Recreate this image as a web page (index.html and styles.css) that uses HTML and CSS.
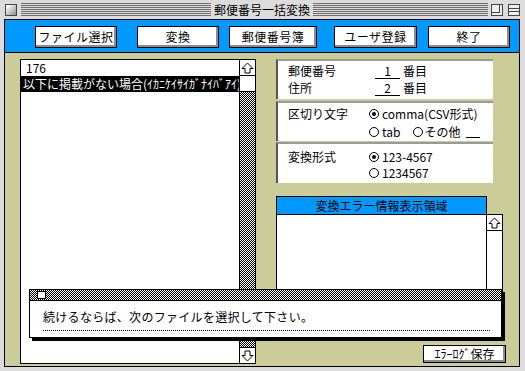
FILE: index.html
```html
<!DOCTYPE html>
<html>
<head>
<meta charset="utf-8">
<title>郵便番号一括変換</title>
<link rel="stylesheet" href="styles.css">
</head>
<body>
<div class="window">
 <div class="titlebar">
  <span class="close-box"></span>
  <span class="stripes first"></span>
  <span class="title">郵便番号一括変換</span>
  <span class="stripes"></span>
  <span class="zoom-box"></span>
  <span class="shade-box"></span>
 </div>
 <div class="content">
  <div class="toolbar">
   <span class="btn">ファイル選択</span>
   <span class="btn gap20">変換</span>
   <span class="btn wide gap10">郵便番号簿</span>
   <span class="btn w83 gap17">ユーザ登録</span>
   <span class="btn gap11">終了</span>
  </div>
  <div class="main">
   <div class="listbox">
    <div class="list">
     <div class="row">176</div>
     <div class="row selected">以下に掲載がない場合(ｲｶﾆｹｲｻｲｶﾞﾅｲﾊﾞｱｲ)</div>
    </div>
    <div class="scrollbar">
     <div class="arrow"><svg width="13" height="12" viewBox="0 0 13 12"><path d="M6.5 1 L12 6.5 H9 V11 H4 V6.5 H1 Z" fill="#fff" stroke="#000"/></svg></div>
     <div class="thumb"></div>
     <div class="track"></div>
     <div class="arrow down"><svg width="13" height="12" viewBox="0 0 13 12"><path d="M6.5 11 L12 5.5 H9 V1 H4 V5.5 H1 Z" fill="#fff" stroke="#000"/></svg></div>
    </div>
   </div>
   <div class="side">
    <div class="panel p1">
     <span>郵便番号</span><span class="val"><span class="field">1</span>番目</span>
     <span>住所</span><span class="val"><span class="field">2</span>番目</span>
    </div>
    <div class="panel p2">
     <span>区切り文字</span><span class="val"><span class="radio on"></span>comma(CSV形式)</span>
     <span></span><span class="val"><span class="radio"></span>tab<span class="radio sp"></span>その他<span class="blank"></span></span>
    </div>
    <div class="panel p3">
     <span>変換形式</span><span class="val"><span class="radio on"></span>123-4567</span>
     <span></span><span class="val"><span class="radio"></span>1234567</span>
    </div>
    <div class="err-head">変換エラー情報表示領域</div>
    <div class="err-list">
     <div class="list"></div>
     <div class="scrollbar plain">
      <div class="arrow"><svg width="13" height="12" viewBox="0 0 13 12"><path d="M6.5 1 L12 6.5 H9 V11 H4 V6.5 H1 Z" fill="#fff" stroke="#000"/></svg></div>
     </div>
    </div>
    <span class="btn save">ｴﾗｰﾛｸﾞ保存</span>
   </div>
  </div>
  <div class="dialog">
   <div class="dialog-bar"><span class="dialog-close"></span></div>
   <div class="dialog-body">
    <p>続けるならば、次のファイルを選択して下さい。</p>
    <div class="rule"></div>
   </div>
  </div>
 </div>
</div>
</body>
</html>
```

FILE: styles.css
```css
*{
 margin:0;
 padding:0;
 box-sizing:border-box;
}
body{
 width:525px;
 height:371px;
 overflow:hidden;
 background:#dcdcdc;
 font-family:"Noto Sans CJK JP","Noto Sans",sans-serif;
 font-size:12px;
 color:#000;
}
.window{
 width:525px;
 height:371px;
 padding:0 5px 4px 4px;
 display:flex;
 flex-direction:column;
}

/* title bar */
.titlebar{
 height:19px;
 display:flex;
 align-items:center;
 padding-left:1px;
}
.close-box{
 width:12px;
 height:12px;
 border:1px solid #444;
 background:linear-gradient(135deg,#fff 10%,#999 90%);
 margin-right:4px;
}
.stripes{
 flex:1;
 height:13px;
 background:repeating-linear-gradient(#6e6e6e 0 1px,#dcdcdc 1px 2px);
}
.stripes.first{
 flex:none;
 width:190px;
}
.title{
 width:102px;
 text-align:center;
 line-height:19px;
}
.zoom-box,.shade-box{
 width:12px;
 height:12px;
 border:1px solid #444;
 background:#eee;
 position:relative;
}
.zoom-box{
 margin-left:3px;
}
.zoom-box::after{
 content:"";
 position:absolute;
 left:0;
 top:0;
 width:7px;
 height:7px;
 border-right:1px solid #444;
 border-bottom:1px solid #444;
}
.shade-box{
 margin-left:5px;
 background:linear-gradient(#eee 0 3px,#444 3px 4px,#eee 4px 6px,#444 6px 7px,#eee 7px);
}

/* content */
.content{
 flex:1;
 border:1px solid #000;
 background:#cccc99;
 position:relative;
 display:flex;
 flex-direction:column;
}
.toolbar{
 height:33px;
 background:#0099ff;
 border-bottom:1px solid #000;
 display:flex;
 align-items:flex-start;
 padding:6px 0 0 30px;
}
.btn{
 display:block;
 width:82px;
 height:22px;
 background:#fff;
 border:1px solid #000;
 box-shadow:inset -2px -2px 0 #8c8c8c;
 text-align:center;
 line-height:19px;
 letter-spacing:.5px;
 white-space:nowrap;
}
.btn.wide{width:88px;}
.btn.w83{width:83px;}
.gap20{margin-left:20px;}
.gap10{margin-left:10px;}
.gap17{margin-left:17px;}
.gap11{margin-left:11px;}

.main{
 flex:1;
 display:flex;
 padding:6px 0 0 15px;
}

/* list boxes */
.listbox{
 width:236px;
 height:305px;
 border:1px solid #000;
 background:#fff;
 display:flex;
}
.list{
 flex:1;
 overflow:hidden;
}
.row{
 height:16px;
 line-height:16px;
 padding-left:5px;
 white-space:nowrap;
 overflow:hidden;
}
.row.selected{
 background:#000;
 color:#fff;
 padding-left:2px;
}
.scrollbar{
 width:16px;
 border-left:1px solid #000;
 display:flex;
 flex-direction:column;
}
.arrow{
 height:16px;
 border-bottom:1px solid #000;
 display:flex;
 align-items:center;
 justify-content:center;
 background:#fff;
}
.arrow.down{
 border-bottom:none;
 border-top:1px solid #000;
}
.thumb{
 height:16px;
 border-bottom:1px solid #000;
 background:#fff;
}
.track,.dialog-bar{
 background:repeating-conic-gradient(#000 0 25%,#fff 0 50%) 0 0/2px 2px;
}
.track{
 flex:1;
}

/* right side */
.side{
 width:230px;
 margin-left:20px;
 display:flex;
 flex-direction:column;
}
.panel{
 width:217px;
 background:#fff;
 border-top:2px solid #9a9a9a;
 border-left:2px solid #555;
 display:grid;
 grid-template-columns:81px auto;
 grid-auto-rows:16px;
 padding-left:10px;
 line-height:16px;
 white-space:nowrap;
}
.p1{
 height:40px;
 padding-top:2px;
 row-gap:1px;
 margin-bottom:2px;
}
.p2{
 height:40px;
 padding-top:3px;
 row-gap:2px;
 margin-bottom:1px;
}
.p3{
 height:41px;
 padding-top:5px;
}
.val{
 display:flex;
 align-items:center;
}
.field{
 width:25px;
 margin-left:6px;
 margin-right:3px;
 border-bottom:1px solid #000;
 text-align:center;
 line-height:14px;
}
.radio{
 width:10px;
 height:10px;
 border:1px solid #000;
 border-radius:50%;
 margin-right:3px;
 position:relative;
 flex:none;
}
.radio.on::after{
 content:"";
 position:absolute;
 left:2px;
 top:2px;
 width:4px;
 height:4px;
 border-radius:50%;
 background:#000;
}
.radio.sp{
 margin-left:13px;
 margin-right:1px;
}
.blank{
 width:14px;
 margin-left:6px;
 height:12px;
 border-bottom:1px solid #000;
}
.err-head{
 width:211px;
 height:19px;
 margin-top:13px;
 background:#0099ff;
 border:1px solid #000;
 text-align:center;
 line-height:17px;
}
.err-list{
 width:227px;
 height:127px;
 margin-top:-1px;
 border:1px solid #000;
 background:#fff;
 display:flex;
}
.btn.save{
 align-self:flex-end;
 width:83px;
 height:18px;
 margin-top:4px;
 line-height:15px;
 letter-spacing:0;
}

/* message dialog over the window */
.dialog{
 position:absolute;
 left:24px;
 top:269px;
 width:473px;
 height:49px;
 background:#fff;
 border:1px solid #000;
 box-shadow:3px 3px 0 #000;
}
.dialog-bar{
 height:11px;
 border-bottom:1px solid #000;
 padding:1px 0 0 7px;
}
.dialog-close{
 display:block;
 width:9px;
 height:8px;
 background:#fff;
 border:1px solid #000;
}
.dialog-body{
 padding:8px 0 0 13px;
}
.dialog-body p{
 line-height:16px;
 letter-spacing:.3px;
}
.rule{
 width:447px;
 margin-top:5px;
 border-top:1px dotted #000;
}
```
